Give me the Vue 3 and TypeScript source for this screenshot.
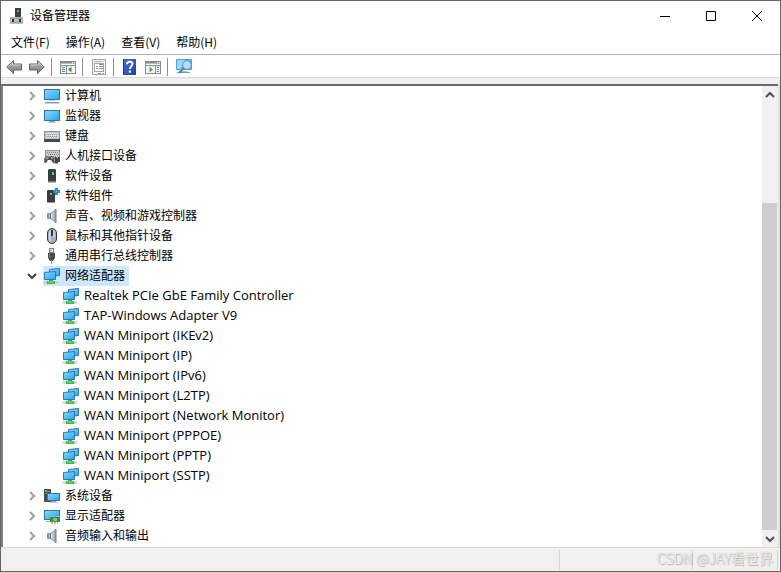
<script setup lang="ts">
import { ref } from 'vue'

interface DeviceNode {
  label: string
  icon: string
  children?: string[]
}

const menus: string[] = ['文件(F)', '操作(A)', '查看(V)', '帮助(H)']

const toolGroups: { icon: string; label: string }[][] = [
  [
    { icon: 'back', label: '后退' },
    { icon: 'forward', label: '前进' },
  ],
  [{ icon: 'console-tree', label: '显示/隐藏控制台树' }],
  [{ icon: 'properties', label: '属性' }],
  [
    { icon: 'help', label: '帮助' },
    { icon: 'action-pane', label: '显示/隐藏操作窗格' },
  ],
  [{ icon: 'scan', label: '扫描检测硬件改动' }],
]

const devices: DeviceNode[] = [
  { label: '计算机', icon: 'computer' },
  { label: '监视器', icon: 'monitor' },
  { label: '键盘', icon: 'keyboard' },
  { label: '人机接口设备', icon: 'hid' },
  { label: '软件设备', icon: 'software' },
  { label: '软件组件', icon: 'component' },
  { label: '声音、视频和游戏控制器', icon: 'speaker' },
  { label: '鼠标和其他指针设备', icon: 'mouse' },
  { label: '通用串行总线控制器', icon: 'usb' },
  {
    label: '网络适配器',
    icon: 'network',
    children: [
      'Realtek PCIe GbE Family Controller',
      'TAP-Windows Adapter V9',
      'WAN Miniport (IKEv2)',
      'WAN Miniport (IP)',
      'WAN Miniport (IPv6)',
      'WAN Miniport (L2TP)',
      'WAN Miniport (Network Monitor)',
      'WAN Miniport (PPPOE)',
      'WAN Miniport (PPTP)',
      'WAN Miniport (SSTP)',
    ],
  },
  { label: '系统设备', icon: 'system' },
  { label: '显示适配器', icon: 'display' },
  { label: '音频输入和输出', icon: 'speaker' },
]

const expanded = ref<string[]>(['网络适配器'])
const selected = ref('网络适配器')

function isOpen(node: DeviceNode): boolean {
  return !!node.children && expanded.value.includes(node.label)
}

function toggle(node: DeviceNode): void {
  expanded.value = expanded.value.includes(node.label)
    ? expanded.value.filter((l) => l !== node.label)
    : [...expanded.value, node.label]
}
</script>

<template>
  <div class="window">
    <svg class="defs" aria-hidden="true">
      <defs>
        <linearGradient id="screen" x1="0" y1="0" x2="1" y2="1">
          <stop offset="0" stop-color="#8ad6fc" />
          <stop offset="0.5" stop-color="#58c0f9" />
          <stop offset="1" stop-color="#249ff0" />
        </linearGradient>
        <linearGradient id="arrow" x1="0" y1="0" x2="0" y2="1">
          <stop offset="0" stop-color="#b8b8b8" />
          <stop offset="1" stop-color="#7c7c7c" />
        </linearGradient>
        <linearGradient id="metal" x1="0" y1="0" x2="1" y2="0">
          <stop offset="0" stop-color="#8e969d" />
          <stop offset="0.5" stop-color="#d5dade" />
          <stop offset="1" stop-color="#9aa2a8" />
        </linearGradient>
        <linearGradient id="book" x1="0" y1="0" x2="1" y2="1">
          <stop offset="0" stop-color="#4a73d6" />
          <stop offset="1" stop-color="#1c3fa6" />
        </linearGradient>
        <symbol id="i-app" viewBox="0 0 16 16">
          <rect x="6" y="0" width="6" height="10" fill="#3c3e40" />
          <rect x="8" y="2" width="2" height="2" fill="#2fd23a" />
          <path d="M2 9h11l1 2H1z" fill="#e4e6e8" />
          <rect x="1" y="10" width="13" height="5" fill="#b9bfc5" />
          <path d="M1 10h13M1 15h13" stroke="#7c838a" />
          <rect x="3" y="11" width="2" height="3" fill="#34383c" />
          <rect x="10" y="11" width="2" height="3" fill="#34383c" />
        </symbol>
        <symbol id="i-back" viewBox="0 0 16 16">
          <path d="M.7 8 7.500 1.500V5H15.500V11H7.500V14.500Z" fill="url(#arrow)" stroke="#626262" />
          <path d="M2.500 7.500 6.500 3.700V6H14.500" fill="none" stroke="#d0d0d0" />
        </symbol>
        <symbol id="i-forward" viewBox="0 0 16 16">
          <path d="M15.300 8 8.500 1.500V5H.5V11H8.500V14.500Z" fill="url(#arrow)" stroke="#626262" />
          <path d="M1.500 6H9.500V3.700L13.500 7.500" fill="none" stroke="#d0d0d0" />
        </symbol>
        <symbol id="i-console-tree" viewBox="0 0 16 16">
          <rect x=".5" y="2.500" width="15" height="12" fill="#f8f8f8" stroke="#858b90" />
          <path d="M0 3.500h16M0 6.500h16" stroke="#858b90" />
          <path d="M1 4.500h14" stroke="#b9bec3" />
          <path d="M12 3.500h1M14 3.500h1" stroke="#fff" />
          <path d="M6.500 7v7" stroke="#858b90" />
          <path d="M2 8.500h3M2 10.500h3M2 12.500h3" stroke="#4b83c4" />
          <path d="M11.500 7.500v6L8 10.500z" fill="#2ba12b" />
        </symbol>
        <symbol id="i-action-pane" viewBox="0 0 16 16">
          <rect x=".5" y="2.500" width="15" height="12" fill="#f8f8f8" stroke="#858b90" />
          <path d="M0 3.500h16M0 6.500h16" stroke="#858b90" />
          <path d="M1 4.500h14" stroke="#b9bec3" />
          <path d="M12 3.500h1M14 3.500h1" stroke="#fff" />
          <path d="M10.500 7v7" stroke="#858b90" />
          <path d="M12 8.500h2M12 10.500h2M12 12.500h2" stroke="#4b83c4" />
          <path d="M4.500 7.500v6L8 10.500z" fill="#42b63a" />
        </symbol>
        <symbol id="i-properties" viewBox="0 0 16 16">
          <rect x="1.500" y=".5" width="13" height="15" fill="#f5f6f7" stroke="#a2a5a8" />
          <path d="M3 2.500h8M12 2.500h1" stroke="#abafb3" />
          <rect x="3.500" y="4.500" width="9" height="8" fill="#fff" stroke="#a2a5a8" />
          <path d="M5 7.500h2M8 7.500h4M5 9.500h2M8 9.500h4M8 5.500h4" stroke="#92999f" />
          <path d="M7 14.500h3" stroke="#4db6ea" />
          <path d="M11 14.500h2" stroke="#a2a5a8" />
        </symbol>
        <symbol id="i-help" viewBox="0 0 16 16">
          <rect x="1" y="0" width="13" height="16" fill="url(#book)" />
          <path d="M1.500 0v16" stroke="#173791" />
          <path d="M5 5.200C5.100 1.800 10.500 1.900 10.500 5c0 2-2.600 2.300-2.600 5" fill="none" stroke="#fff" stroke-width="2" />
          <rect x="6.800" y="11.500" width="2.200" height="2.200" fill="#fff" />
        </symbol>
        <symbol id="i-scan" viewBox="0 0 16 16">
          <path d="M.5.5h15v10H.5z" fill="#62baf0" stroke="#4f9fd0" />
          <path d="M1 1h9L4 10H1z" fill="#9bd7f8" />
          <path d="M1 13.500h13" stroke="#7f98a6" />
          <path d="M3 12.500h9" stroke="#b5c3cc" />
          <path d="M8 9 3 14" stroke="#3d8cc0" stroke-width="2" />
          <circle cx="11" cy="6" r="4.300" fill="#bfe5fb" fill-opacity=".85" stroke="#5c93b4" />
        </symbol>
        <symbol id="i-computer" viewBox="0 0 16 16">
          <rect x=".5" y="1.500" width="15" height="10" fill="url(#screen)" stroke="#31789f" />
          <path d="M5 12.500h6" stroke="#c4ced8" />
          <path d="M1 14.500h14" stroke="#8496a9" />
          <path d="M0 15.500h16" stroke="#c8d0d8" />
        </symbol>
        <symbol id="i-monitor" viewBox="0 0 16 16">
          <rect x=".5" y="2.500" width="15" height="10" fill="url(#screen)" stroke="#31789f" />
          <path d="M5 13.500h6" stroke="#93a1ad" />
          <path d="M4 14.500h8" stroke="#c4ccd2" />
        </symbol>
        <symbol id="i-keyboard" viewBox="0 0 16 16">
          <rect x=".5" y="3.500" width="15" height="8" fill="#c2c7cb" stroke="#8c9297" />
          <path d="M2 5.500h12M3 7.500h11M2 9.500h1M4 9.500h8M13 9.500h1" stroke="#f7f8f9" stroke-dasharray="1 1" />
          <path d="M2 6.500h12M2 8.500h12" stroke="#959da3" stroke-dasharray="1 1" />
          <rect x="0" y="11" width="16" height="3" fill="#45494d" />
        </symbol>
        <symbol id="i-hid" viewBox="0 0 16 16">
          <rect x="1.500" y="2.500" width="14" height="8" fill="#c9cdd0" stroke="#8c9297" />
          <path d="M3 4.500h11M4 6.500h11M3 8.500h11" stroke="#80878d" stroke-dasharray="1 1" />
          <path d="M.5 15C-.3 11 .5 8 3 8l2 1 3-1c2 1 2.500 4 2 7H9l-2-3H4l-2 3z" fill="#4b5258" />
          <path d="M3 8.500v3M1.500 10h3" stroke="#6bb9e8" />
          <rect x="7" y="9" width="2" height="2" fill="#e8792e" />
          <path d="M11.500 9v5.500h1.500V10M15 9v5" fill="none" stroke="#3f454a" stroke-width="2" />
        </symbol>
        <symbol id="i-software" viewBox="0 0 16 16">
          <path d="M4 2l1-1h6l1 1v12H4z" fill="#393b3d" />
          <rect x="8" y="4" width="2" height="3" fill="#3bea38" />
          <path d="M4 13.500h8" stroke="#75797c" />
          <path d="M4 14.500h8" stroke="#b9bcbe" />
        </symbol>
        <symbol id="i-component" viewBox="0 0 16 16">
          <path d="M3 3l1-1h6l1 1v12H3z" fill="#393b3d" />
          <rect x="6" y="5" width="2" height="2" fill="#3bea38" />
          <path d="M3 14.500h8" stroke="#999da0" />
          <path d="M11 0h3v2h2v3h-2v2h-3V5H9V2h2z" fill="#2c8bd0" />
          <rect x="12" y="3" width="1" height="1" fill="#9bd0f2" />
        </symbol>
        <symbol id="i-speaker" viewBox="0 0 16 16">
          <path d="M3.500 5.500H6.500L11.500 1.500v13L6.500 10.500H3.500z" fill="url(#metal)" stroke="#90989e" />
          <path d="M12 1v14" stroke="#747d84" />
          <path d="M6.500 5v6" stroke="#69727a" />
          <path d="M4 6v4" stroke="#7d868d" />
        </symbol>
        <symbol id="i-mouse" viewBox="0 0 16 16">
          <rect x="3.500" y=".5" width="9" height="15" rx="4.500" fill="#a2b0bd" stroke="#30363b" />
          <path d="M5 7V5c0-3 1-3 2-3v12c-1 0-2-1-2-3zM9 2c2 0 2 1 2 3v3c0 1-1 1-2 1z" fill="#c9d4de" />
          <path d="M8 2v6" stroke="#30363b" stroke-width="2" />
        </symbol>
        <symbol id="i-usb" viewBox="0 0 16 16">
          <rect x="5.500" y=".5" width="4" height="4" fill="#e3e5e6" stroke="#7e8386" />
          <path d="M6.500 2.500h2" stroke="#676b6e" stroke-dasharray="1 1" />
          <path d="M4 5h7v5l-2 3H6l-2-3z" fill="#4a4c4d" />
          <path d="M5.500 6v4" stroke="#85898b" />
          <path d="M7.500 12v4" stroke="#8d9194" />
        </symbol>
        <symbol id="i-network" viewBox="0 0 16 16">
          <path d="M5.500 1.500 15.500.5v7l-10 1z" fill="url(#screen)" stroke="#2f79ad" />
          <path d="M.5 4.500 11.500 3.500v8H.5z" fill="url(#screen)" stroke="#2f79ad" />
          <path d="M0 14.500h14" stroke="#c3cbc3" stroke-width="2" />
          <path d="M5 12h4v1h2v3H3v-3h2z" fill="#3fb645" />
          <path d="M4 14h6" stroke="#8bd98e" />
        </symbol>
        <symbol id="i-system" viewBox="0 0 16 16">
          <rect x="0" y="1" width="7" height="13" fill="#474b4e" />
          <path d="M1 3.500h5M1 5.500h5" stroke="#899095" />
          <rect x="1" y="2" width="2" height="2" fill="#42d442" />
          <rect x="3.500" y="5.500" width="12" height="7" fill="url(#screen)" stroke="#31789f" />
          <path d="M7 13.500h5" stroke="#99a5af" />
          <path d="M5 14.500h9" stroke="#c5cdd3" />
        </symbol>
        <symbol id="i-display" viewBox="0 0 16 16">
          <rect x=".5" y="2.500" width="15" height="9" fill="url(#screen)" stroke="#31789f" />
          <path d="M2 13.500h5" stroke="#a3b3bf" />
          <rect x="6" y="8" width="10" height="6" fill="#249346" />
          <path d="M6 8.500h10" stroke="#8bc49b" />
          <rect x="9" y="10" width="4" height="3" fill="#9caab0" />
          <path d="M7 14.500h7" stroke="#e8a317" stroke-width="2" stroke-dasharray="2 1" />
        </symbol>
      </defs>
    </svg>

    <header class="titlebar">
      <svg class="icon"><use href="#i-app" /></svg>
      <h1 class="title">设备管理器</h1>
      <div class="controls">
        <button type="button" aria-label="最小化">
          <svg viewBox="0 0 10 10"><path d="M0 5.500h10" /></svg>
        </button>
        <button type="button" aria-label="最大化">
          <svg viewBox="0 0 10 10"><path d="M.5.5h9v9h-9z" /></svg>
        </button>
        <button type="button" aria-label="关闭">
          <svg viewBox="0 0 10 10"><path d="M0 0 10 10M10 0 0 10" /></svg>
        </button>
      </div>
    </header>

    <nav class="menubar">
      <button v-for="menu in menus" :key="menu" type="button">{{ menu }}</button>
    </nav>

    <div class="toolbar" role="toolbar">
      <div v-for="(group, i) in toolGroups" :key="i" class="group">
        <button v-for="tool in group" :key="tool.icon" type="button" :aria-label="tool.label">
          <svg class="icon"><use :href="'#i-' + tool.icon" /></svg>
        </button>
      </div>
    </div>

    <main class="pane">
      <ul class="tree" role="tree">
        <li v-for="node in devices" :key="node.label" role="treeitem" :aria-expanded="isOpen(node)">
          <div class="row">
            <button class="expander" type="button" :aria-label="node.label" @click="toggle(node)">
              <svg v-if="isOpen(node)" class="chevron open" viewBox="0 0 10 10"><path d="M1 3 5 7 9 3" /></svg>
              <svg v-else class="chevron" viewBox="0 0 10 10"><path d="M3 1 7 5 3 9" /></svg>
            </button>
            <button
              class="item"
              :class="{ selected: selected === node.label }"
              type="button"
              @click="selected = node.label"
            >
              <svg class="icon"><use :href="'#i-' + node.icon" /></svg>
              <span>{{ node.label }}</span>
            </button>
          </div>
          <ul v-if="isOpen(node)" class="children" role="group">
            <li v-for="child in node.children" :key="child" class="row" role="treeitem">
              <button
                class="item latin"
                :class="{ selected: selected === child }"
                type="button"
                @click="selected = child"
              >
                <svg class="icon"><use href="#i-network" /></svg>
                <span>{{ child }}</span>
              </button>
            </li>
          </ul>
        </li>
      </ul>
      <div class="scrollbar">
        <button type="button" aria-label="向上滚动">
          <svg viewBox="0 0 10 10"><path d="M1 7 5 3 9 7" /></svg>
        </button>
        <div class="track"><div class="thumb"></div></div>
        <button type="button" aria-label="向下滚动">
          <svg viewBox="0 0 10 10"><path d="M1 3 5 7 9 3" /></svg>
        </button>
      </div>
    </main>

    <footer class="statusbar">
      <div class="cell main"></div>
      <div class="cell wide"></div>
      <div class="cell narrow"></div>
      <span class="watermark">CSDN @JAY看世界</span>
    </footer>
  </div>
</template>

<style>
body {
  margin: 0;
}
</style>

<style scoped>
.window {
  position: relative;
  display: flex;
  flex-direction: column;
  box-sizing: border-box;
  height: 100vh;
  border: 1px solid #666;
  background: #fff;
  color: #000;
  font: 12px/20px 'Noto Sans CJK SC', sans-serif;
  overflow: hidden;
}
.defs {
  position: absolute;
  width: 0;
  height: 0;
}
button {
  margin: 0;
  padding: 0;
  border: 0;
  background: none;
  color: inherit;
  font: inherit;
}
ul {
  margin: 0;
  padding: 0;
  list-style: none;
}
.icon {
  display: block;
  flex: none;
  width: 16px;
  height: 16px;
}
.titlebar {
  display: flex;
  flex: none;
  align-items: center;
  height: 29px;
  padding-left: 8px;
}
.title {
  margin: 0 0 0 5px;
  padding-bottom: 2px;
  font-size: 12px;
  font-weight: 400;
}
.controls {
  display: flex;
  height: 100%;
  margin-left: auto;
}
.controls button {
  display: grid;
  place-items: center;
  width: 46px;
}
.controls svg {
  width: 10px;
  height: 10px;
  fill: none;
  stroke: #000;
}
.menubar {
  display: flex;
  flex: none;
  gap: 16px;
  height: 24px;
  padding-left: 10px;
  border-bottom: 1px solid #b0b0b0;
}
.toolbar {
  display: flex;
  flex: none;
  align-items: center;
  height: 20px;
  padding: 2px 5px 0;
  border-bottom: 1px solid #dadada;
}
.group {
  display: flex;
  align-items: center;
  gap: 7px;
  height: 18px;
}
.group + .group {
  margin-left: 6px;
  padding-left: 8px;
  border-left: 1px solid #8d8d8d;
}
.pane {
  display: flex;
  flex: 1;
  min-height: 0;
  border-top: 6px solid #f0f0f0;
  border-right: 2px solid #e3e3e3;
  background: #fff;
}
.tree {
  flex: 1;
  min-width: 0;
  border-top: 2px solid #696969;
  border-left: 2px solid #808080;
  overflow: hidden;
}
.row {
  display: flex;
  height: 20px;
}
.expander {
  display: grid;
  place-items: center;
  width: 18px;
  margin-left: 20px;
}
.chevron {
  width: 10px;
  height: 10px;
  fill: none;
  stroke: #a0a0a0;
  stroke-width: 2;
}
.chevron.open {
  stroke: #404040;
}
.item {
  display: flex;
  align-items: center;
  gap: 5px;
  height: 20px;
  margin-left: 2px;
  padding: 0 4px 0 1px;
  white-space: nowrap;
}
.item span {
  padding-bottom: 2px;
}
.item.selected {
  background: #cce8ff;
}
.item.latin {
  gap: 5px;
  font-family: 'Open Sans', 'Noto Sans', sans-serif;
  font-size: 13px;
}
.children .item {
  margin-left: 59px;
}
.scrollbar {
  display: flex;
  flex: none;
  flex-direction: column;
  width: 16px;
  border-top: 2px solid #696969;
  background: #f0f0f0;
}
.scrollbar button {
  display: grid;
  flex: none;
  place-items: center;
  height: 17px;
}
.scrollbar svg {
  width: 10px;
  height: 10px;
  fill: none;
  stroke: #505050;
  stroke-width: 2;
}
.track {
  display: flex;
  flex: 1;
  flex-direction: column;
}
.track::before {
  flex: 100;
  content: '';
}
.thumb {
  flex: 327;
  margin-right: 1px;
  background: #cdcdcd;
}
.statusbar {
  position: relative;
  display: flex;
  flex: none;
  height: 20px;
  padding: 2px 2px 1px 0;
  border-top: 1px solid #dadada;
  background: #f0f0f0;
}
.cell {
  border-right: 1px solid #d5d5d5;
}
.cell.main {
  flex: 1;
}
.cell.wide {
  width: 132px;
}
.cell.narrow {
  width: 84px;
}
.watermark {
  position: absolute;
  right: 7px;
  bottom: 3px;
  color: #f4f4f4;
  font-weight: 300;
  font-size: 14px;
  text-shadow: 1px 1px 1px #aaa, 0 0 1px #aaa;
}
</style>
